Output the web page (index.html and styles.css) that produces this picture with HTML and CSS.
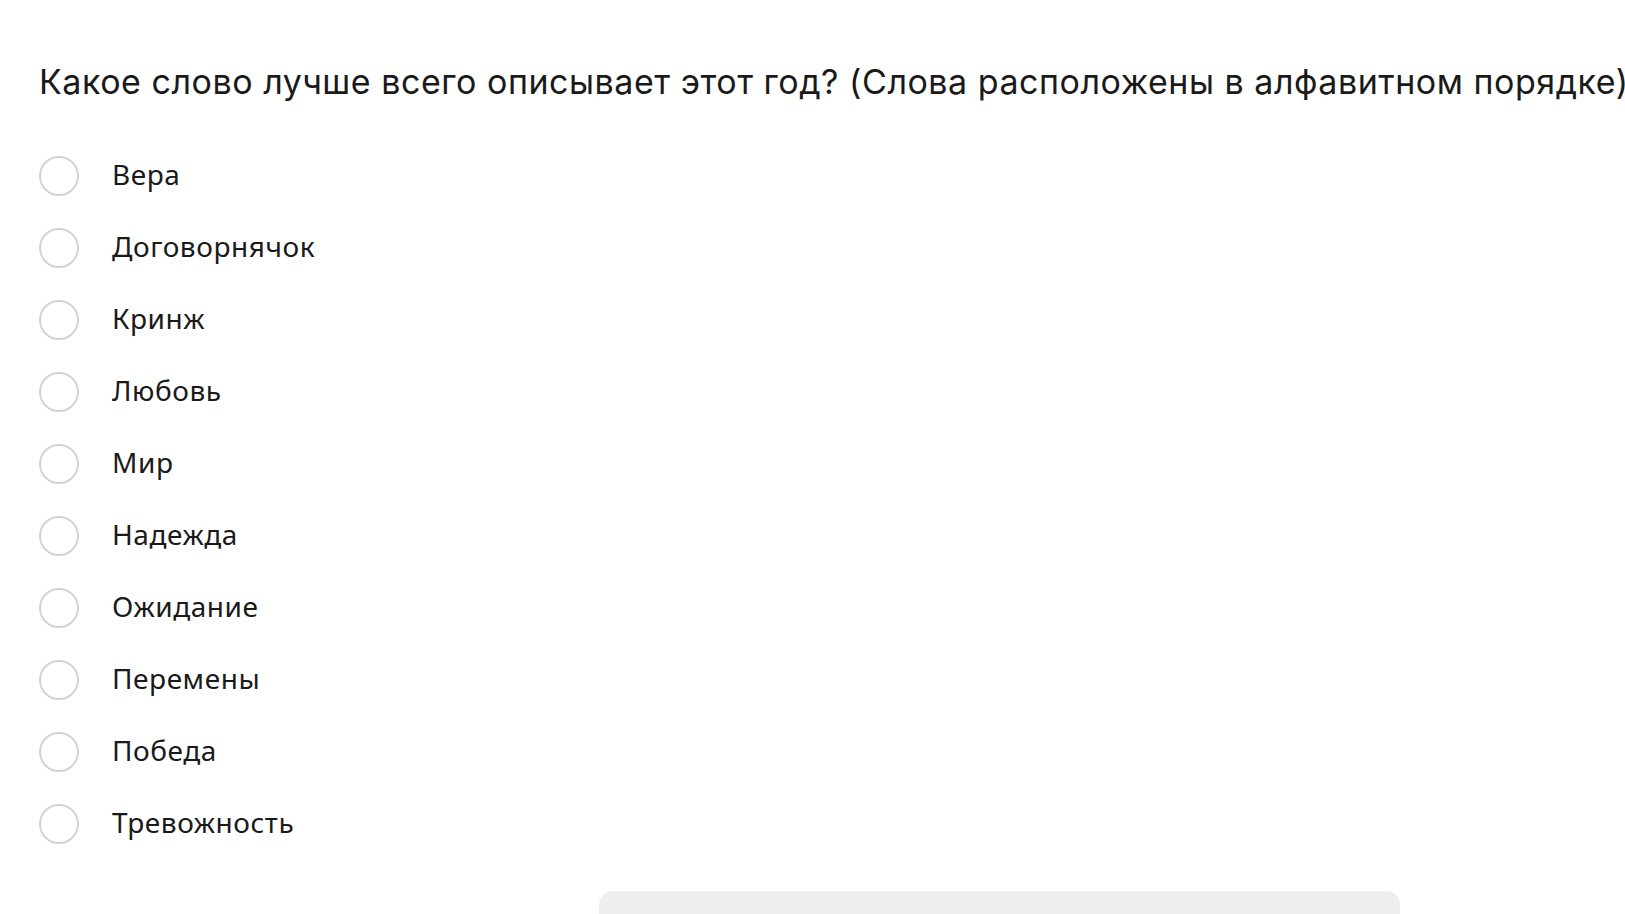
FILE: index.html
```html
<!DOCTYPE html>
<html lang="ru">
<head>
<meta charset="utf-8">
<link rel="stylesheet" href="styles.css">
</head>
<body>
<div class="page">
  <h1 class="question">Какое слово лучше всего описывает этот год? (Слова расположены в алфавитном порядке)</h1>
  <ul class="options">
    <li class="option"><span class="radio"></span><span class="label">Вера</span></li>
    <li class="option"><span class="radio"></span><span class="label">Договорнячок</span></li>
    <li class="option"><span class="radio"></span><span class="label">Кринж</span></li>
    <li class="option"><span class="radio"></span><span class="label">Любовь</span></li>
    <li class="option"><span class="radio"></span><span class="label">Мир</span></li>
    <li class="option"><span class="radio"></span><span class="label">Надежда</span></li>
    <li class="option"><span class="radio"></span><span class="label">Ожидание</span></li>
    <li class="option"><span class="radio"></span><span class="label">Перемены</span></li>
    <li class="option"><span class="radio"></span><span class="label">Победа</span></li>
    <li class="option"><span class="radio"></span><span class="label">Тревожность</span></li>
  </ul>
  <div class="panel"></div>
</div>
</body>
</html>
```
FILE: styles.css
```css
html, body {
  margin: 0;
  padding: 0;
  background: #ffffff;
  overflow: hidden;
}
.page {
  padding: 60px 0 0 39px;
  width: 1625px;
  height: 914px;
  box-sizing: border-box;
  overflow: hidden;
}
.question {
  margin: 0;
  font-family: "Inter", "Noto Sans", sans-serif;
  font-weight: 400;
  font-size: 34px;
  line-height: 44px;
  color: #1a1a1a;
  white-space: nowrap;
  letter-spacing: 0.52px;
}
.options {
  list-style: none;
  margin: 36px 0 0 0;
  padding: 0;
  display: flex;
  flex-direction: column;
}
.option {
  display: flex;
  align-items: center;
  height: 72px;
  gap: 33px;
}
.radio {
  width: 40px;
  height: 40px;
  box-sizing: border-box;
  border: 2px solid #d3d3d3;
  border-radius: 50%;
  flex: none;
}
.label {
  font-family: "Noto Sans", sans-serif;
  font-size: 28px;
  line-height: 38px;
  margin-bottom: 4px;
  letter-spacing: 0.55px;
  color: #1a1a1a;
}
.panel {
  margin: 31px 0 0 560px;
  width: 801px;
  height: 23px;
  background: #efefef;
  border-radius: 14px 14px 0 0;
}
```
